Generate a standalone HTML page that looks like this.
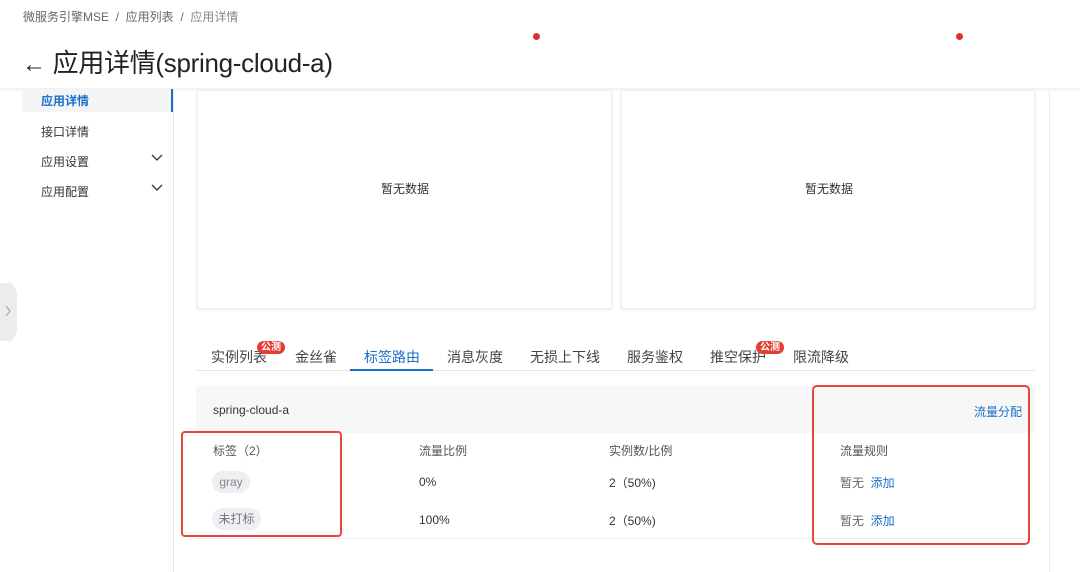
<!DOCTYPE html>
<html><head><meta charset="utf-8"><style>
*{margin:0;padding:0;box-sizing:border-box}
body{width:1080px;height:572px;overflow:hidden;background:#fff;font-family:"Liberation Sans","Noto Sans CJK SC",sans-serif;color:#333;position:relative}
.a{position:absolute;white-space:nowrap}
.f12{font-size:12px}
</style></head><body>
<div class="a f12" style="left:23px;top:8px;color:#666">微服务引擎MSE &nbsp;/&nbsp; 应用列表 &nbsp;/&nbsp; <span style="color:#888">应用详情</span></div>
<div class="a" style="left:22px;top:43px;font-size:26px;color:#222;letter-spacing:-0.3px"><span style="font-size:24px">←</span>&nbsp;应用详情(spring-cloud-a)</div>
<div class="a" style="left:533px;top:33px;width:7px;height:7px;border-radius:50%;background:#d9312b"></div>
<div class="a" style="left:956px;top:33px;width:7px;height:7px;border-radius:50%;background:#d9312b"></div>
<div class="a" style="left:0;top:88px;width:1080px;height:4px;background:linear-gradient(#f0f0f0,#fff)"></div>
<div class="a" style="left:173px;top:90px;width:1px;height:482px;background:#e8e8e8"></div>
<div class="a" style="left:22px;top:89px;width:151px;height:23px;background:#f5f5f5;border-right:2px solid #1a6fc9"></div>
<div class="a f12" style="left:41px;top:92px;color:#1a6fc9;font-weight:bold">应用详情</div>
<div class="a f12" style="left:41px;top:123px">接口详情</div>
<div class="a f12" style="left:41px;top:153px">应用设置</div>
<div class="a f12" style="left:41px;top:183px">应用配置</div>
<svg class="a" style="left:151px;top:153px" width="12" height="10"><path d="M1 2l5 5 5-5" fill="none" stroke="#333" stroke-width="1.3"/></svg>
<svg class="a" style="left:151px;top:183px" width="12" height="10"><path d="M1 2l5 5 5-5" fill="none" stroke="#333" stroke-width="1.3"/></svg>
<div class="a" style="left:0;top:283px;width:17px;height:58px;background:#ececec;clip-path:polygon(0 0,70% 0,100% 15%,100% 85%,70% 100%,0 100%)"></div>
<svg class="a" style="left:4px;top:305px" width="8" height="12"><path d="M2 1l4 5-4 5" fill="none" stroke="#aaa" stroke-width="1.2"/></svg>
<div class="a" style="left:197px;top:90px;width:415px;height:219px;border:1px solid #ececec;box-shadow:0 1px 3px #eee"></div>
<div class="a" style="left:621px;top:90px;width:414px;height:219px;border:1px solid #ececec;box-shadow:0 1px 3px #eee"></div>
<div class="a f12" style="left:381px;top:180px">暂无数据</div>
<div class="a f12" style="left:805px;top:180px">暂无数据</div>
<div class="a" style="left:1049px;top:90px;width:1px;height:482px;background:#eee"></div>
<div class="a" style="left:196px;top:370px;width:839px;height:1px;background:#e6e6e6"></div>
<div class="a" style="left:350px;top:369px;width:83px;height:2px;background:#1a6fc9"></div>
<div class="a" style="left:211px;top:347px;font-size:14px;color:#444">实例列表</div>
<div class="a" style="left:257px;top:341px;font-size:10px;background:#e43d33;color:#fff;border-radius:7px;padding:0 4px;line-height:13px;font-weight:bold">公测</div>
<div class="a" style="left:295px;top:347px;font-size:14px;color:#444">金丝雀</div>
<div class="a" style="left:364px;top:347px;font-size:14px;color:#1a6fc9">标签路由</div>
<div class="a" style="left:447px;top:347px;font-size:14px;color:#444">消息灰度</div>
<div class="a" style="left:530px;top:347px;font-size:14px;color:#444">无损上下线</div>
<div class="a" style="left:627px;top:347px;font-size:14px;color:#444">服务鉴权</div>
<div class="a" style="left:710px;top:347px;font-size:14px;color:#444">推空保护</div>
<div class="a" style="left:756px;top:341px;font-size:10px;background:#e43d33;color:#fff;border-radius:7px;padding:0 4px;line-height:13px;font-weight:bold">公测</div>
<div class="a" style="left:793px;top:347px;font-size:14px;color:#444">限流降级</div>
<div class="a" style="left:196px;top:386px;width:839px;height:47px;background:#f7f7f7"></div>
<div class="a f12" style="left:213px;top:403px">spring-cloud-a</div>
<div class="a f12" style="left:974px;top:403px;color:#1a6fc9">流量分配</div>
<div class="a f12" style="left:213px;top:442px;color:#555">标签（2）</div>
<div class="a f12" style="left:419px;top:442px;color:#555">流量比例</div>
<div class="a f12" style="left:609px;top:442px;color:#555">实例数/比例</div>
<div class="a f12" style="left:840px;top:442px;color:#555">流量规则</div>
<div class="a f12" style="left:212px;top:471px;width:38px;height:22px;border-radius:11px;background:#eeeef3;color:#888;text-align:center;line-height:22px">gray</div>
<div class="a f12" style="left:212px;top:508px;width:49px;height:22px;border-radius:11px;background:#eeeef3;color:#777;text-align:center;line-height:22px">未打标</div>
<div class="a f12" style="left:419px;top:475px">0%</div>
<div class="a f12" style="left:419px;top:513px">100%</div>
<div class="a f12" style="left:609px;top:474px">2（50%)</div>
<div class="a f12" style="left:609px;top:512px">2（50%)</div>
<div class="a f12" style="left:840px;top:474px;color:#666">暂无 &nbsp;<span style="color:#1a6fc9">添加</span></div>
<div class="a f12" style="left:840px;top:512px;color:#666">暂无 &nbsp;<span style="color:#1a6fc9">添加</span></div>
<div class="a" style="left:196px;top:538px;width:839px;height:1px;background:#eee"></div>
<div class="a" style="left:181px;top:431px;width:161px;height:106px;border:2.5px solid #e04840;border-radius:4px"></div>
<div class="a" style="left:812px;top:385px;width:218px;height:160px;border:2.5px solid #e04840;border-radius:5px"></div>
</body></html>
